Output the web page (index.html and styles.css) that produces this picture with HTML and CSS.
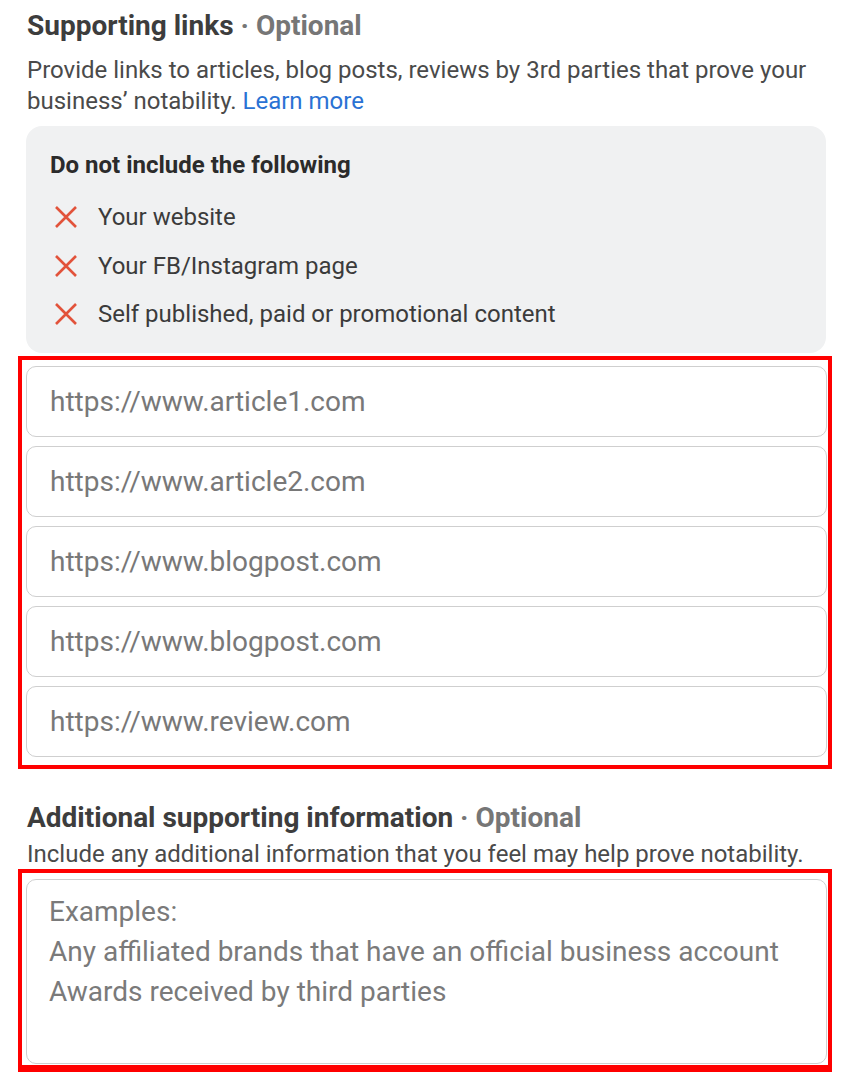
FILE: index.html
```html
<!DOCTYPE html>
<html lang="en">
<head>
<meta charset="utf-8">
<title>Supporting links</title>
<link rel="stylesheet" href="styles.css">
</head>
<body>
<main class="page">
  <section class="section">
    <h2 class="heading">Supporting links <span class="optional">· Optional</span></h2>
    <p class="desc">Provide links to articles, blog posts, reviews by 3rd parties that prove your business’ notability. <a class="link" href="#">Learn more</a></p>
    <div class="notice">
      <h3 class="notice-title">Do not include the following</h3>
      <ul class="notice-list">
        <li class="notice-item"><svg class="x-icon" viewBox="0 0 24 24"><path d="M2 2 L22 22 M22 2 L2 22"/></svg><span>Your website</span></li>
        <li class="notice-item"><svg class="x-icon" viewBox="0 0 24 24"><path d="M2 2 L22 22 M22 2 L2 22"/></svg><span>Your FB/Instagram page</span></li>
        <li class="notice-item"><svg class="x-icon" viewBox="0 0 24 24"><path d="M2 2 L22 22 M22 2 L2 22"/></svg><span>Self published, paid or promotional content</span></li>
      </ul>
    </div>
    <div class="annot annot-links">
      <div class="field">https://www.article1.com</div>
      <div class="field">https://www.article2.com</div>
      <div class="field">https://www.blogpost.com</div>
      <div class="field">https://www.blogpost.com</div>
      <div class="field">https://www.review.com</div>
    </div>
  </section>
  <section class="section section-2">
    <h2 class="heading">Additional supporting information <span class="optional">· Optional</span></h2>
    <p class="desc desc-2">Include any additional information that you feel may help prove notability.</p>
    <div class="annot annot-text">
      <div class="textarea">Examples:<br>Any affiliated brands that have an official business account<br>Awards received by third parties</div>
    </div>
  </section>
</main>
</body>
</html>
```

FILE: styles.css
```css
* { box-sizing: border-box; }
html, body { margin: 0; padding: 0; background: #ffffff; }
body {
  font-family: Roboto, "Liberation Sans", Arial, sans-serif;
  color: #333;
}
.page {
  width: 849px;
  padding: 9px 0 0 0;
}
.section { display: flex; flex-direction: column; }
.heading {
  margin: 0 0 0 27px;
  font-size: 28px;
  line-height: 34px;
  font-weight: 700;
  color: #3d3d3d;
}
.optional { font-weight: 700; color: #767676; }
.desc {
  margin: 12px 20px 0 27px;
  font-size: 24px;
  line-height: 31px;
  color: #4a4a4a;
}
.link { color: #2a72d4; text-decoration: none; }
.notice {
  margin: 9px 23px 0 26px;
  background: #f0f1f2;
  border-radius: 16px;
  padding: 23px 24px 23px 24px;
}
.notice-title {
  margin: 0;
  font-size: 24px;
  line-height: 32px;
  font-weight: 700;
  color: #2b2b2b;
}
.notice-list { list-style: none; margin: 20px 0 0 0; padding: 0; display: flex; flex-direction: column; gap: 16.5px; }
.notice-item {
  display: flex;
  align-items: center;
  gap: 20px;
  font-size: 24px;
  line-height: 32px;
  color: #3b3b3b;
}
.x-icon { width: 24px; height: 24px; margin-left: 4px; flex: none; }
.x-icon path { stroke: #e2533b; stroke-width: 2.6; fill: none; }
.annot {
  margin: 3px 17px 0 18px;
  border: 4px solid #ff0000;
  padding: 6px 1px 8px 4px;
  display: flex;
  flex-direction: column;
  gap: 9px;
}
.field {
  height: 71px;
  border: 1px solid #cfcfcf;
  border-radius: 10px;
  display: flex;
  align-items: center;
  padding-left: 23px;
  font-size: 28px;
  color: #787878;
}
.section-2 { margin-top: 32px; }
.desc-2 { margin: 5px 0 0 27px; font-size: 24px; line-height: 28px; }
.annot-text { margin-top: 1px; padding-bottom: 1px; border-bottom-width: 7px; }
.textarea {
  height: 185px;
  border: 1px solid #cfcfcf;
  border-radius: 10px;
  padding: 12px 22px;
  font-size: 28px;
  line-height: 40px;
  color: #7a7a7a;
}
```
